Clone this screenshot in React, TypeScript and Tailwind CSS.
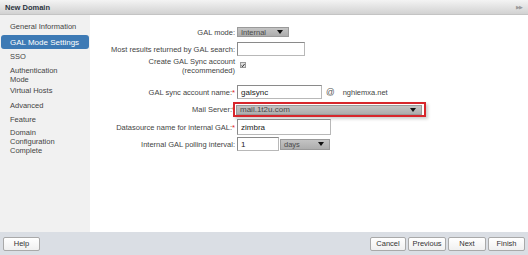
import React from 'react';

const steps = [
  { label: ['General Information'], cls: '' },
  { label: ['GAL Mode Settings'], cls: 'mt-[4px]', active: true },
  { label: ['SSO'], cls: 'mt-[2.5px]' },
  { label: ['Authentication', 'Mode'], cls: 'mt-[5px]' },
  { label: ['Virtual Hosts'], cls: 'mt-[2px]' },
  { label: ['Advanced'], cls: 'mt-[6px]' },
  { label: ['Feature'], cls: 'mt-[5px]' },
  { label: ['Domain', 'Configuration', 'Complete'], cls: 'mt-[4.5px]' },
];

const Arrow = () => (
  <svg width="6" height="4" viewBox="0 0 6 4" className="shrink-0">
    <path d="M0 0h6L3 4z" fill="#111" />
  </svg>
);

const Select = ({ value, className }: { value: string; className: string }) => (
  <div
    className={`flex items-center justify-between border border-[#9a9a9a] bg-gradient-to-b from-[#c4c4c4] to-[#adadad] pl-[3px] pr-[5px] text-[#4a4a4a] ${className}`}
  >
    <span>{value}</span>
    <Arrow />
  </div>
);

const Input = ({ value, className }: { value?: string; className: string }) => (
  <div
    className={`flex items-center border border-[#b8b8b8] border-t-[#8a8a8a] border-l-[#8a8a8a] bg-white pl-[3px] text-[8px] text-[#222] ${className}`}
  >
    {value}
  </div>
);

const Label = ({ children, req }: { children: React.ReactNode; req?: boolean }) => (
  <div className="w-[147px] shrink-0 pr-[2px] text-right text-[#444]">
    {children}
    {req && <span className="text-[#e02020]">*</span>}
  </div>
);

const Button = ({ children, className }: { children: React.ReactNode; className: string }) => (
  <button
    className={`flex h-[14px] items-center justify-center rounded-[2px] border border-[#a9a9a9] bg-gradient-to-b from-white to-[#f0f0f0] text-[7.5px] text-[#333] ${className}`}
  >
    {children}
  </button>
);

export default function App() {
  return (
    <div className="flex h-[255px] w-[528px] flex-col overflow-hidden bg-white font-['Liberation_Sans',Arial,sans-serif] text-[7.5px] leading-[9px]">
      {/* title bar */}
      <div className="flex h-[15px] shrink-0 items-center justify-between border-b border-[#c4c4c4] bg-gradient-to-b from-[#f4f4f4] to-[#d2d2d2] pl-[5px] pr-[6px]">
        <span className="text-[7.5px] font-bold text-[#2c3440]">New Domain</span>
        <span className="text-[5px] tracking-[-1px] text-[#9a9a9a]">▶▶</span>
      </div>

      <div className="flex min-h-0 flex-1">
        {/* sidebar */}
        <div className="w-[90px] shrink-0 bg-[#f1f1f1] px-[1px] pt-[7px]">
          {steps.map((s) => (
            <div
              key={s.label[0]}
              className={
                s.active
                  ? `${s.cls} rounded-[3px] bg-[#3d7ab5] py-[2.5px] pl-[9px] text-[8px] text-white`
                  : `${s.cls} pl-[9px] text-[#444]`
              }
            >
              {s.label.map((l) => (
                <div key={l}>{l}</div>
              ))}
            </div>
          ))}
        </div>

        {/* form */}
        <div className="flex-1 pt-[12px]">
          <div className="flex h-[10px] items-center">
            <Label>GAL mode:</Label>
            <Select value="Internal" className="h-[10px] w-[52px]" />
          </div>
          <div className="mt-[5px] flex h-[14px] items-center">
            <Label>Most results returned by GAL search:</Label>
            <Input className="h-[14px] w-[68px]" />
          </div>
          <div className="mt-[1px] flex items-start">
            <Label>
              Create GAL Sync account
              <br />
              (recommended)
            </Label>
            <div className="ml-[3px] mt-[5px] flex h-[6px] w-[6px] items-center justify-center border border-[#999] bg-[#ddd]">
              <svg width="5" height="5" viewBox="0 0 5 5">
                <path d="M0.6 2.6l1.2 1.3L4.4 0.8" stroke="#111" strokeWidth="1.1" fill="none" />
              </svg>
            </div>
          </div>
          <div className="mt-[10px] flex h-[14px] items-center">
            <Label req>GAL sync account name:</Label>
            <Input value="galsync" className="h-[14px] w-[85px]" />
            <span className="ml-[4px] text-[8.5px] text-[#555]">@</span>
            <span className="ml-[8px] text-[#444]">nghiemxa.net</span>
          </div>
          <div className="mt-[3px] flex h-[15px] items-center">
            <Label req>Mail Server:</Label>
            <div className="-ml-[4px] flex h-[15px] w-[193px] items-center border-2 border-[#d7262c] bg-white pl-[1px] shadow-[2px_2px_3px_rgba(0,0,0,0.2)]">
              <Select value="mail.1t2u.com" className="h-[10px] w-[186px] text-[8px]" />
            </div>
          </div>
          <div className="mt-[2px] flex h-[16px] items-center">
            <Label req>Datasource name for internal GAL:</Label>
            <Input value="zimbra" className="h-[16px] w-[94px]" />
          </div>
          <div className="mt-[2px] flex h-[14px] items-center">
            <Label>Internal GAL polling interval:</Label>
            <Input value="1" className="h-[14px] w-[42px]" />
            <Select value="days" className="ml-[1px] h-[11px] w-[50px]" />
          </div>
        </div>
      </div>

      {/* footer */}
      <div className="flex h-[23px] shrink-0 items-center justify-between bg-[#dadee4] px-[3px]">
        <Button className="w-[37px]">Help</Button>
        <div className="flex gap-[2px]">
          <Button className="w-[36px]">Cancel</Button>
          <Button className="w-[38px]">Previous</Button>
          <Button className="w-[38px]">Next</Button>
          <Button className="w-[37px]">Finish</Button>
        </div>
      </div>
    </div>
  );
}
